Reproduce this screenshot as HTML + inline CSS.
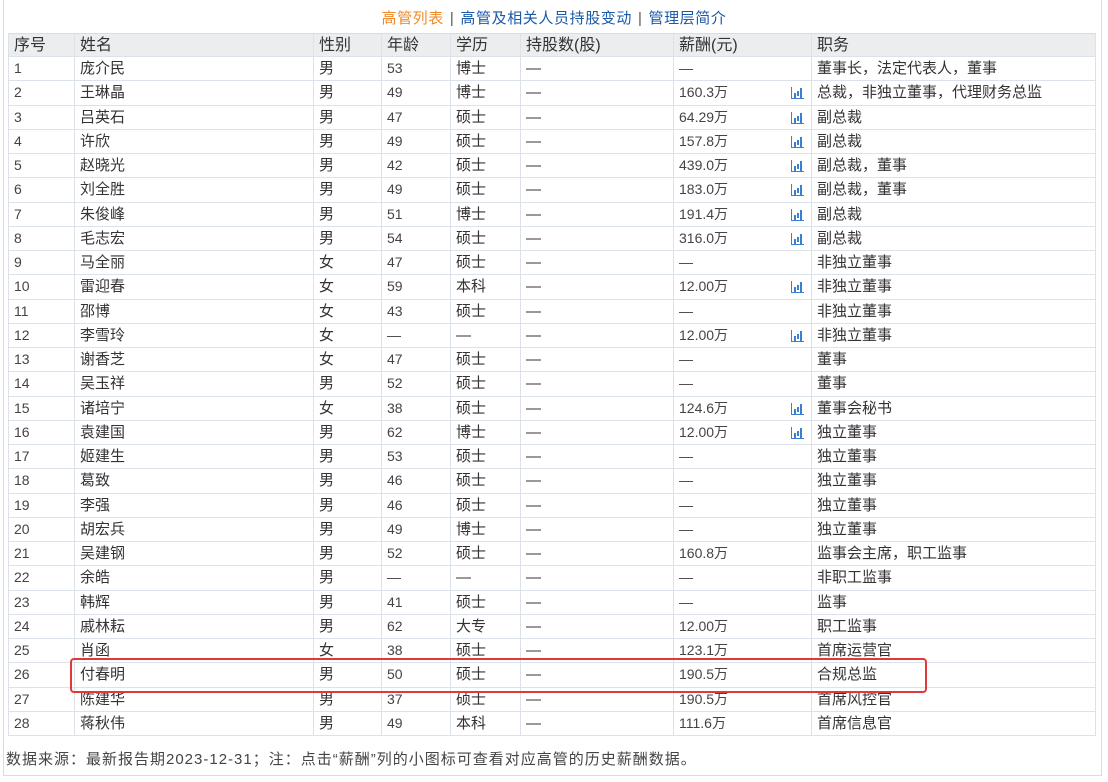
<!DOCTYPE html>
<html><head><meta charset="utf-8"><style>
body{margin:0;width:1108px;height:782px;background:#fff;overflow:hidden;position:relative;font-family:"Liberation Sans","Noto Sans CJK SC",sans-serif;color:#333;}
.frame{position:absolute;left:3px;top:0;width:1097px;height:775px;border-left:1px solid #d6dde6;border-right:1px solid #d6dde6;border-bottom:1px solid #d6dde6;}
.tabs{position:absolute;top:7px;left:0;width:1108px;text-align:center;font-size:15px;letter-spacing:.6px;color:#1a5aa8;}
.tabs .on{color:#f08a2c}
.tabs .sep{color:#555;margin:0 6px}
.row{position:absolute;left:8px;width:1088px;height:24.25px;border-bottom:1px solid #dbe2ea;box-sizing:border-box;}
.hd{background:#ebedef;color:#333;border-top:1px solid #d6dde6;}
.hd .c{font-size:16px}
.c{position:absolute;top:0;height:100%;line-height:23px;border-left:1px solid #dbe2ea;padding-left:5px;box-sizing:border-box;font-size:15px;white-space:nowrap}
.c0{left:0;width:66px}.c1{left:66px;width:239px}.c2{left:305px;width:68px}.c3{left:373px;width:69px}.c4{left:442px;width:70px}.c5{left:512px;width:153px}.c6{left:665px;width:138px}.c7{left:803px;width:285px;border-right:1px solid #dbe2ea}
.n{font-size:14px;color:#444}
.ic{position:absolute;left:117px;top:6px;width:12px;height:11px;border-left:1.5px solid #3a7fd0;border-bottom:1.5px solid #3a7fd0}
.ic:before{content:"";position:absolute;left:2px;bottom:0;width:2px;height:5px;background:#3a7fd0;box-shadow:3px -2px 0 0 #3a7fd0}
.ic:after{content:"";position:absolute;left:8px;bottom:0;width:2px;height:10px;background:#3a7fd0}
.box{position:absolute;left:70px;top:658px;width:857px;height:35px;border:2.5px solid #e0393a;border-radius:4px;box-sizing:border-box}
.foot{position:absolute;left:6px;top:748px;font-size:15px;letter-spacing:1px;color:#444}
</style></head><body>
<div class="frame"></div>
<div class="tabs"><span class="on">高管列表</span><span class="sep">|</span>高管及相关人员持股变动<span class="sep">|</span>管理层简介</div>
<div id="t"></div>
<div class="box"></div>
<div class="foot">数据来源：最新报告期2023-12-31；注：点击“薪酬”列的小图标可查看对应高管的历史薪酬数据。</div>
<script>
var d=[
["1","庞介民","男","53","博士","—","—",0,"董事长，法定代表人，董事"],
["2","王琳晶","男","49","博士","—","160.3万",1,"总裁，非独立董事，代理财务总监"],
["3","吕英石","男","47","硕士","—","64.29万",1,"副总裁"],
["4","许欣","男","49","硕士","—","157.8万",1,"副总裁"],
["5","赵晓光","男","42","硕士","—","439.0万",1,"副总裁，董事"],
["6","刘全胜","男","49","硕士","—","183.0万",1,"副总裁，董事"],
["7","朱俊峰","男","51","博士","—","191.4万",1,"副总裁"],
["8","毛志宏","男","54","硕士","—","316.0万",1,"副总裁"],
["9","马全丽","女","47","硕士","—","—",0,"非独立董事"],
["10","雷迎春","女","59","本科","—","12.00万",1,"非独立董事"],
["11","邵博","女","43","硕士","—","—",0,"非独立董事"],
["12","李雪玲","女","—","—","—","12.00万",1,"非独立董事"],
["13","谢香芝","女","47","硕士","—","—",0,"董事"],
["14","吴玉祥","男","52","硕士","—","—",0,"董事"],
["15","诸培宁","女","38","硕士","—","124.6万",1,"董事会秘书"],
["16","袁建国","男","62","博士","—","12.00万",1,"独立董事"],
["17","姬建生","男","53","硕士","—","—",0,"独立董事"],
["18","葛致","男","46","硕士","—","—",0,"独立董事"],
["19","李强","男","46","硕士","—","—",0,"独立董事"],
["20","胡宏兵","男","49","博士","—","—",0,"独立董事"],
["21","吴建钢","男","52","硕士","—","160.8万",0,"监事会主席，职工监事"],
["22","余皓","男","—","—","—","—",0,"非职工监事"],
["23","韩辉","男","41","硕士","—","—",0,"监事"],
["24","戚林耘","男","62","大专","—","12.00万",0,"职工监事"],
["25","肖函","女","38","硕士","—","123.1万",0,"首席运营官"],
["26","付春明","男","50","硕士","—","190.5万",0,"合规总监"],
["27","陈建华","男","37","硕士","—","190.5万",0,"首席风控官"],
["28","蒋秋伟","男","49","本科","—","111.6万",0,"首席信息官"]];
var h='<div class="row hd" style="top:33px"><div class="c c0">序号</div><div class="c c1">姓名</div><div class="c c2">性别</div><div class="c c3">年龄</div><div class="c c4">学历</div><div class="c c5">持股数(股)</div><div class="c c6">薪酬(元)</div><div class="c c7">职务</div></div>';
for(var i=0;i<d.length;i++){var r=d[i],t=57+i*24.25;
h+='<div class="row" style="top:'+t+'px"><div class="c c0 n">'+r[0]+'</div><div class="c c1">'+r[1]+'</div><div class="c c2">'+r[2]+'</div><div class="c c3 n">'+r[3]+'</div><div class="c c4">'+r[4]+'</div><div class="c c5">'+r[5]+'</div><div class="c c6 n">'+r[6]+(r[7]?'<span class="ic"></span>':'')+'</div><div class="c c7">'+r[8]+'</div></div>';}
document.getElementById('t').innerHTML=h;
</script>
</body></html>
